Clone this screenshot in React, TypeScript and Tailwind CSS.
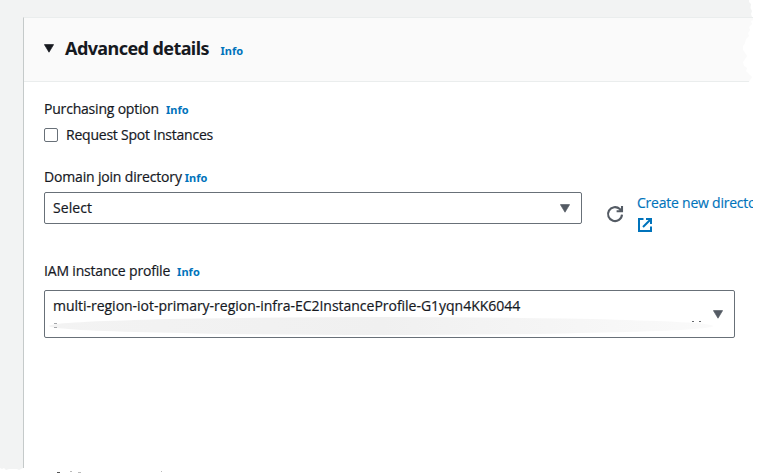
import type { ReactNode } from "react";

function Info({ className = "" }: { className?: string }) {
  return (
    <a className={`font-['Noto_Sans',sans-serif] text-[11px] font-bold text-[#0073bb] tracking-[0.05px] ${className}`}>Info</a>
  );
}

function Caret({ className = "" }: { className?: string }) {
  return (
    <svg width="10" height="9" viewBox="0 0 10 9" className={`shrink-0 ${className}`}>
      <path d="M0.4 0.6h9.2L5 8.2z" fill="currentColor" stroke="currentColor" strokeWidth="0.7" strokeLinejoin="round" />
    </svg>
  );
}

function Label({ children, gap, track }: { children: ReactNode; gap: string; track: string }) {
  return (
    <div className={`flex h-5 items-baseline leading-5 whitespace-nowrap ${gap}`}>
      <span className={`[-webkit-text-stroke:0.2px] ${track}`}>{children}</span>
      <Info />
    </div>
  );
}

function RefreshIcon() {
  return (
    <svg width="18" height="18" viewBox="0 0 18 18" fill="none" stroke="#545b64" strokeWidth="2.1" className="shrink-0">
      <path d="M16 9.600a7 7 0 1 1-2.200-5.600l1.700 1.700" />
      <path d="M16 1v5.200h-5.400" />
      <path d="M16 3v3h-3z" fill="#545b64" stroke="none" />
    </svg>
  );
}

function ExternalIcon() {
  return (
    <svg width="16" height="16" viewBox="0 0 16 16" fill="none" stroke="#0073bb" strokeWidth="2">
      <path d="M6.500 2H2v12h12V9.500" />
      <path d="M9 2h5v5M13.500 2.500L6 10" />
    </svg>
  );
}

function TornEdge() {
  return (
    <svg className="absolute inset-0" width="757" height="474" viewBox="0 0 757 474" fill="white">
      <path d="M757 0H749l0 2 2 2-.5 4 1.500 3-1 3 1 3h1v3l-2 1 1 3-3 3 1 3-2 3 1 3-3 3-1 4-2 3 0 4 2 3 2 3-2 3-2 3 1 4 3 2-1 3 3 3 3 3-2 3-2 3V83H757z" />
      <path d="M0 468l2 1 2-1 2 2 3-1 8 0 2 1 4-2h5v6H0z" />
    </svg>
  );
}

export default function App() {
  return (
    <div className="relative flex h-[474px] w-[757px] overflow-hidden bg-white font-['Open_Sans','Noto_Sans',sans-serif] text-[14px] font-medium text-[#16191f]">
      <div className="w-[23px] shrink-0 bg-[#f2f3f3]" />
      <div className="flex min-w-0 flex-1 flex-col">
        <div className="h-[17px] shrink-0 bg-[#f2f3f3]" />
        <section className="flex min-h-0 flex-1 flex-col border-t border-l border-t-[#eaeded] border-l-[#c5caca]">
          <header className="flex h-16 shrink-0 items-start border-b border-[#eaeded] bg-[#fafafa] pt-[18px] pl-5">
            <Caret className="mt-2" />
            <div className="ml-[11px] flex items-baseline leading-6 whitespace-nowrap">
              <h2 className="font-['Noto_Sans',sans-serif] text-[18px] font-bold tracking-[-0.58px]">Advanced details</h2>
              <Info className="ml-[11.5px]" />
            </div>
          </header>
          <div className="flex flex-1 flex-col pt-[17px] pl-5">
            <Label gap="gap-[7px]" track="tracking-[-0.2px]">Purchasing option</Label>
            <div className="mt-[6px] flex h-5 items-center gap-2 whitespace-nowrap">
              <span className="size-[14px] rounded-[2px] border border-[#687078] bg-white" />
              <span className="leading-5 tracking-[-0.22px] [-webkit-text-stroke:0.2px]">Request Spot Instances</span>
            </div>
            <div className="mt-[22px] flex flex-col">
              <Label gap="gap-[3px]" track="tracking-[-0.17px]">Domain join directory</Label>
            </div>
            <div className="mt-[5px] flex h-8 shrink-0">
              <div className="flex w-[538px] shrink-0 items-center justify-between rounded-[2px] border border-[#687078] pr-[11px] pl-2">
                <span className="leading-5 tracking-[0.05px] [-webkit-text-stroke:0.2px]">Select</span>
                <Caret className="text-[#545b64]" />
              </div>
              <div className="mt-[13px] ml-6 h-[18px] shrink-0">
                <RefreshIcon />
              </div>
              <div className="mt-px ml-[13px] w-[116px] shrink-0 overflow-hidden whitespace-nowrap">
                <a className="block leading-5 tracking-[-0.23px] text-[#0073bb] [-webkit-text-stroke:0.15px]">Create new directo</a>
              </div>
            </div>
            <div className="-mt-[7px] ml-[593px] h-4 w-4 shrink-0">
              <ExternalIcon />
            </div>
            <div className="mt-7 flex flex-col">
              <Label gap="gap-[7px]" track="tracking-[-0.18px]">IAM instance profile</Label>
            </div>
            <div className="relative mt-[9px] flex h-12 w-[691px] shrink-0 items-center justify-between rounded-[2px] border border-[#687078] pr-[11px] pl-2">
              <span className="mb-4 leading-5 tracking-[-0.02px] whitespace-nowrap [-webkit-text-stroke:0.2px]">
                multi-region-iot-primary-region-infra-EC2InstanceProfile-G1yqn4KK6044
              </span>
              <svg className="absolute top-[25px] left-[3px]" width="668" height="20" viewBox="0 0 668 20">
                <defs>
                  <linearGradient id="smudge" x1="0" x2="1">
                    <stop offset="0" stopColor="#f3f3f3" />
                    <stop offset="0.5" stopColor="#f0f0f0" />
                    <stop offset="0.8" stopColor="#f6f6f6" />
                    <stop offset="1" stopColor="#fafafa" />
                  </linearGradient>
                </defs>
                <ellipse cx="333" cy="10" rx="332" ry="9" fill="url(#smudge)" />
                <path d="M6 7.500h3M6 11.500h3" stroke="#a5a7aa" strokeWidth="1" />
                <path d="M644 5.500h2M651 5.500h2" stroke="#66696d" strokeWidth="1" />
              </svg>
              <Caret className="text-[#545b64]" />
            </div>
          </div>
        </section>
      </div>
      <TornEdge />
      <svg className="absolute bottom-0 left-[56px]" width="110" height="3" viewBox="0 0 110 3">
        <path d="M1 1.500h3" stroke="#555" />
        <path d="M14 .5h2M22 1.500h3M105 .5h1" stroke="#bbb" />
      </svg>
    </div>
  );
}
